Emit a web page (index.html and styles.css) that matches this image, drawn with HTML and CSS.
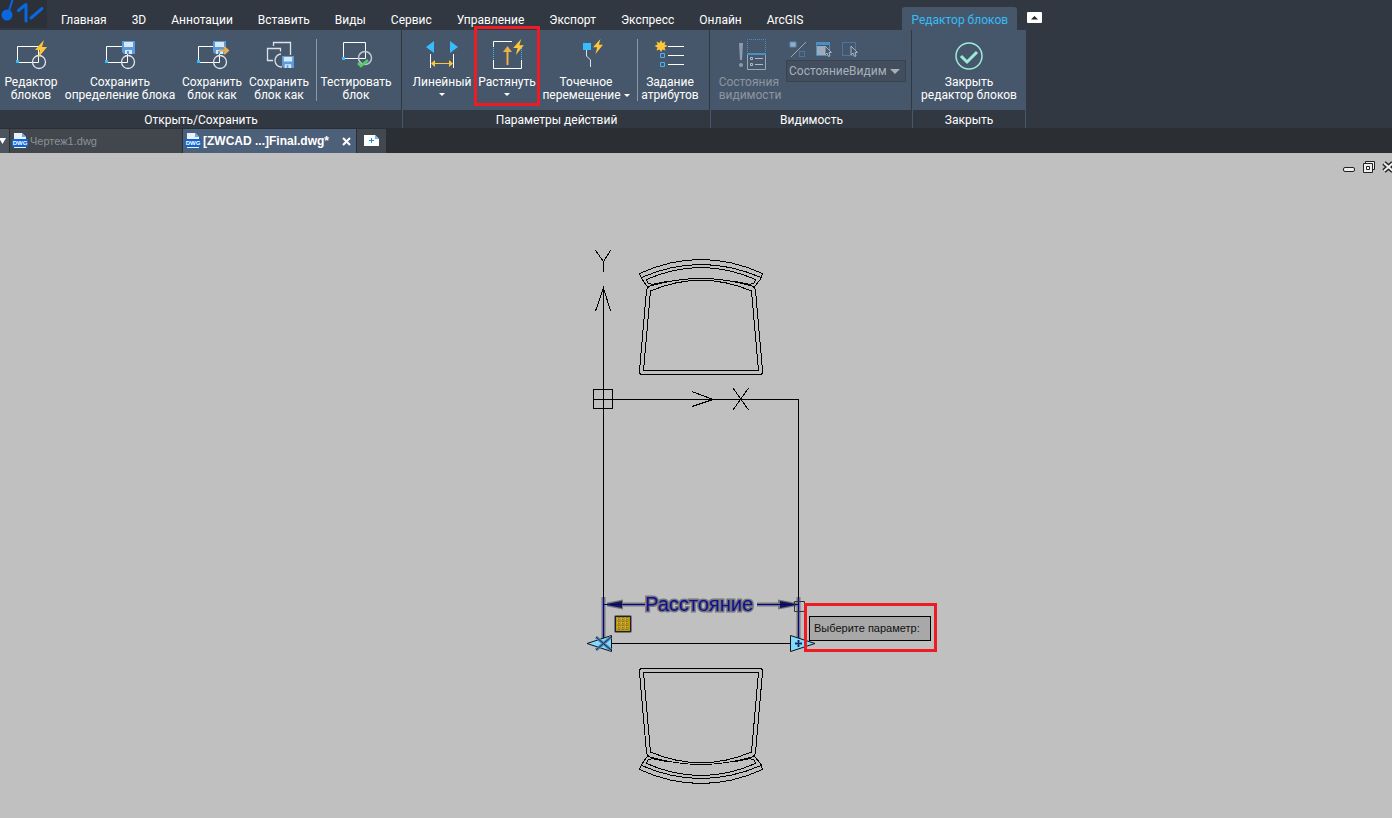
FILE: index.html
```
<!DOCTYPE html>
<html lang="ru">
	<head>
		<meta charset="UTF-8" />
		<meta name="viewport" content="width=device-width, initial-scale=1.0" />
		<title>ZWCAD</title>
		<link rel="stylesheet" href="styles.css">
	</head>
	<body>
		<svg class="defs" width="0" height="0" aria-hidden="true">
			<symbol id="block" viewBox="0 0 34 32">
				<path d="M3.500 8.500H24.500V24.500H3.500Z" fill="none" stroke="#fff" />
				<circle cx="25" cy="24" r="6.500" fill="none" stroke="#e3e7ec" stroke-width="1.300" />
				<rect x="2" y="22" width="3" height="3" fill="#2fc0ff" />
			</symbol>
			<symbol id="bolt" viewBox="0 0 12 18">
				<path d="M9 0L0 10H5L3 18L12 7H7Z" fill="#ffc63a" />
			</symbol>
			<symbol id="disk" viewBox="0 0 13 13">
				<path d="M0 0H13V13H2L0 11Z" fill="#5b9bdc" />
				<path d="M2 1H11V6H2ZM3 9H10V13H3Z" fill="#d7e8f8" />
				<path d="M5 10H7V13H5Z" fill="#5b9bdc" />
			</symbol>
			<symbol id="cursor" viewBox="0 0 8 12">
				<path d="M1 1V10L3 8L4.500 11.500L6 11L5 7.500H7.500Z" fill="#47576b" stroke="#aab3bd" />
			</symbol>
			<symbol id="page" viewBox="0 0 16 16">
				<path d="M2 0H10L14 4V15H2Z" fill="#e8f1fb" />
				<path d="M10 0V4H14Z" fill="#6fa5e8" />
				<rect y="6" width="16" height="8" rx="1" fill="#0f66d0" />
			</symbol>
		</svg>

		<header class="menu">
			<svg class="logo" viewBox="0 0 48 30">
				<path d="M0 0H47V28H0Z" fill="#2b3039" />
				<g fill="none" stroke="#0968e0" stroke-linecap="round">
					<path d="M8 14L13 -2" stroke-width="2" />
					<path d="M18.500 10.500L25 5M26 4.500V21M31 18L42 8.500" stroke-width="3" />
				</g>
				<circle cx="7" cy="15" r="5.500" fill="#0968e0" />
			</svg>
			<nav class="tabs">
				<button class="tab">Главная</button>
				<button class="tab">3D</button>
				<button class="tab">Аннотации</button>
				<button class="tab">Вставить</button>
				<button class="tab">Виды</button>
				<button class="tab">Сервис</button>
				<button class="tab">Управление</button>
				<button class="tab">Экспорт</button>
				<button class="tab">Экспресс</button>
				<button class="tab">Онлайн</button>
				<button class="tab">ArcGIS</button>
			</nav>
			<button class="tab active">Редактор блоков</button>
			<button class="collapse" aria-label="Свернуть ленту">
				<svg width="15" height="11"><rect width="15" height="11" rx="1" fill="#fff" /><path d="M4 7.500L7.500 4L11 7.500Z" fill="#222" /></svg>
			</button>
		</header>

		<div class="ribbon">
			<section class="panel panel-open">
				<div class="tools">
					<button class="tool">
						<svg width="34" height="32"><use href="#block" width="34" height="32" /><use href="#bolt" x="21" y="2" width="12" height="18" /></svg>
						Редактор<br />блоков
					</button>
					<button class="tool">
						<svg width="34" height="32"><use href="#block" width="34" height="32" /><use href="#disk" x="19" y="3" width="13" height="13" /></svg>
						Сохранить<br />определение блока
					</button>
					<button class="tool">
						<svg width="34" height="32"><use href="#block" width="34" height="32" /><use href="#disk" x="18" y="3" width="13" height="13" /><path d="M24 12.500H32M29 9L33 12.500L29 16" fill="none" stroke="#e9b04b" stroke-width="2" /></svg>
						Сохранить<br />блок как
					</button>
					<button class="tool">
						<svg width="34" height="32"><path d="M11.500 8V4.500H28.500V17M11 22.500H5.500V10.500H18.500V13.500M19 16A6.500 6.500 0 1 0 20 29" fill="none" stroke="#dde2e8" stroke-width="1.300" /><use href="#disk" x="20" y="18" width="12" height="12" /></svg>
						Сохранить<br />блок как
					</button>
					<i class="sep"></i>
					<button class="tool">
						<svg width="34" height="32"><path d="M4.500 4.500H26.500V20.500H4.500Z" fill="none" stroke="#fff" /><circle cx="26" cy="20" r="6.500" fill="none" stroke="#bdc7d2" stroke-width="1.500" /><rect x="3" y="19" width="3" height="3" fill="#2fc0ff" /><path d="M19 25L22 28L29 22" fill="none" stroke="#52cf62" stroke-width="2.500" /></svg>
						Тестировать<br />блок
					</button>
				</div>
				<h2>Открыть/Сохранить</h2>
			</section>

			<section class="panel panel-actions">
				<div class="tools">
					<button class="tool">
						<svg width="34" height="32"><path d="M1 9L9 3V15ZM33 9L25 3V15Z" fill="#35bdff" /><path d="M5.500 16V30M28.500 16V30" stroke="#fff" /><path d="M7 25.500H27" stroke="#ffc63a" /><path d="M6 25.500L10 22V29ZM28 25.500L24 22V29Z" fill="#ffc63a" /></svg>
						Линейный<span class="arrow"></span>
					</button>
					<button class="tool">
						<svg width="34" height="32"><path d="M3.500 9V3.500H22M3.500 22V30.500H31.500V22" fill="none" stroke="#fff" /><path d="M3.500 10V22M31.500 10V22" stroke="#35bdff" stroke-dasharray="1 1" /><path d="M17.500 27V12" stroke="#e9b04b" stroke-width="2" /><path d="M13 14L17.500 8L22 14Z" fill="#e9b04b" /><use href="#bolt" x="23" y="1" width="11" height="16" /></svg>
						Растянуть<span class="arrow"></span>
						<span class="frame"></span>
					</button>
					<button class="tool">
						<svg width="34" height="32"><rect x="14" y="5" width="8" height="7" fill="#35bdff" /><path d="M17.500 12V18L21.500 22V29" fill="none" stroke="#dde2e8" /><use href="#bolt" x="24" y="1" width="10" height="15" /></svg>
						Точечное<br />перемещение <span class="arrow inline"></span>
					</button>
					<i class="sep"></i>
					<button class="tool">
						<svg width="34" height="32"><path d="M8 2L9.500 5L12.500 3.500L11.500 6.500L14.500 8L11.500 9.500L12.500 12.500L9.500 11.500L8 14L6.500 11.500L3.500 12.500L4.500 9.500L1.500 8L4.500 6.500L3.500 3.500L6.500 5Z" fill="#ffc63a" /><path d="M15 8.500H31M15 17.500H31M15 26.500H31" stroke="#fff" /><path d="M7.500 15.500H11.500V19.500H7.500ZM7.500 24.500H11.500V28.500H7.500Z" fill="none" stroke="#45b3f4" /></svg>
						Задание<br />атрибутов
					</button>
				</div>
				<h2>Параметры действий</h2>
			</section>

			<section class="panel panel-visibility">
				<div class="tools">
					<button class="tool" disabled>
						<svg width="34" height="32"><path d="M6 5H10L9 22H7Z" fill="#8c9bad" /><circle cx="8" cy="27" r="2" fill="#8c9bad" /><path d="M14.500 16V1.500H32.500V16" fill="none" stroke="#4a8fc4" stroke-dasharray="1 1" /><path d="M14.500 15.500H32.500V31.500H14.500Z" fill="none" stroke="#9ca7b4" /><path d="M14 16H33" stroke="#4a8fc4" stroke-width="2" /><path d="M17.500 19.500H19.500V21.500H17.500ZM17.500 25.500H19.500V27.500H17.500ZM22 20.500H30M22 26.500H30" fill="none" stroke="#b2bbc5" /></svg>
						Состояния<br />видимости
					</button>
					<div class="states">
						<div class="small-tools">
							<button disabled aria-label="Режим видимости"><svg width="18" height="17"><path d="M1 1H7V6H1Z" fill="#9faab8" stroke="#4a8fc4" /><path d="M2 16L17 1" stroke="#9ca7b4" /><path d="M10.500 10.500H15.500V15.500H10.500Z" fill="none" stroke="#4a9ad8" stroke-dasharray="1 1" /></svg></button>
							<button disabled aria-label="Сделать видимым"><svg width="18" height="17"><path d="M1.500 1.500H14.500V14.500H1.500Z" fill="none" stroke="#4a8fc4" /><path d="M1 1H15V4H1Z" fill="#4a8fc4" /><path d="M2 5H11V14H2Z" fill="#9faab8" /><use href="#cursor" x="9" y="4" width="8" height="12" /></svg></button>
							<button disabled aria-label="Сделать невидимым"><svg width="18" height="17"><path d="M1.500 1.500H14.500V14.500H1.500Z" fill="none" stroke="#4a9ad8" stroke-dasharray="1 1" /><use href="#cursor" x="9" y="4" width="8" height="12" /></svg></button>
						</div>
						<select class="state" disabled aria-label="Состояние видимости"><option>СостояниеВидим</option></select>
					</div>
				</div>
				<h2>Видимость</h2>
			</section>

			<section class="panel panel-close">
				<div class="tools">
					<button class="tool">
						<svg width="34" height="32"><circle cx="17" cy="18" r="13" fill="none" stroke="#9debd6" stroke-width="1.500" /><path d="M9 18L15 24L25 14" fill="none" stroke="#9debd6" stroke-width="3" /></svg>
						Закрыть<br />редактор блоков
					</button>
				</div>
				<h2>Закрыть</h2>
			</section>
		</div>

		<div class="files">
			<button class="file-list" aria-label="Список файлов"><svg width="9" height="8"><path d="M-1 1H6L2.500 7Z" fill="#fff" /></svg></button>
			<div class="file">
				<svg width="16" height="16"><use href="#page" width="16" height="16" /><text class="dwg" x="8" y="12">DWG</text></svg>
				Чертеж1.dwg
			</div>
			<div class="file current">
				<svg width="16" height="16"><use href="#page" width="16" height="16" /><text class="dwg" x="8" y="12">DWG</text></svg>
				[ZWCAD ...]Final.dwg*
				<button class="file-close" aria-label="Закрыть файл"><svg width="9" height="9"><path d="M1 1L8 8M8 1L1 8" stroke="#fff" stroke-width="2" /></svg></button>
			</div>
			<button class="file-new" aria-label="Новый файл"><svg width="16" height="12"><path d="M0 0H11L15 4V11H0Z" fill="#fff" /><path d="M11 0V4H15" fill="#7ab5e6" /><path d="M5 5.500H10M7.500 3V8" stroke="#168edc" /></svg></button>
		</div>

		<main class="canvas">
			<div class="window-buttons">
				<button aria-label="Свернуть"><svg width="13" height="12"><rect x="1.500" y="6.500" width="11" height="4" rx="1.500" fill="#eee" stroke="#222" /></svg></button>
				<button aria-label="Восстановить"><svg width="13" height="12"><path d="M3.500 .500H12.500V8.500H3.500Z" fill="#eee" stroke="#222" /><path d="M1.500 2.500H10.500V11.500H1.500Z" fill="#eee" stroke="#222" /><path d="M4.500 5.500H7.500V8.500H4.500Z" fill="#fff" stroke="#222" /></svg></button>
				<button aria-label="Закрыть"><svg width="13" height="12"><path d="M2 2L11 10M11 2L2 10" stroke="#222" stroke-width="5" /><path d="M2 2L11 10M11 2L2 10" stroke="#eee" stroke-width="2" /></svg></button>
			</div>
			<svg class="drawing" width="240" height="550" viewBox="580 240 240 550">
				<g class="line">
					<!-- UCS icon and table -->
					<path d="M595.500 250.500L603.500 261.500L610.500 250.500M603.500 261V272" />
					<path d="M595.500 311L603.500 288L610.500 311" />
					<path d="M603.500 288V643.500H798.500V399.500H593" />
					<path d="M593.500 389.500H612.500V408.500H593.500Z" />
					<path d="M692 391.500L713 399.500L692 406.500M733 388L748.500 410M748.500 388L733 410" />
					<!-- chairs -->
					<g id="chair">
						<path d="M639.500 273.500Q701 245.500 762.500 273.500L761 278.500L754 287.500" />
						<path d="M639.500 273.500L641.500 278.500L648 287.500M641.500 277.500Q701 251.500 761 277.500" />
						<path d="M667 281.500L652 284.500L648 283L646.500 279.500Q701 255.500 755.500 279.500L754 283L750 284.500L735 281.500" />
						<path d="M646.500 290.500Q647 286.500 652 285.500Q701 271.500 750 285.500Q755 286.500 755.500 290.500L762.500 370.500V373L761 374.500H641L639.500 373V370.500Z" />
						<path d="M650.500 291Q701 269.500 751.500 291L758.500 370.500H643.500Z" />
					</g>
					<use href="#chair" transform="translate(0 1043) scale(1 -1)" />
				</g>
				<!-- distance parameter -->
				<path class="halo" d="M603.500 597V642M798.500 597V642M607 604.500H645M757 604.500H798M608 604.500L621 602V607ZM794 604.500L780 602V607Z" />
				<path class="head" d="M604 604.500L622 601V608ZM798 604.500L780 601V608Z" />
				<path class="param" d="M603.500 597V640M798.500 597V640M603 604.500H645M757 604.500H798" />
				<text class="distance" x="645" y="611">Расстояние</text>
				<path class="pick" d="M794.500 601.500H804.500V611.500H794.500Z" />
				<!-- action marker -->
				<rect x="614" y="615" width="18" height="18" rx="2" fill="#767676" />
				<rect x="615.500" y="616.500" width="15" height="15" fill="#b8951b" stroke="#222" />
				<path d="M617 619H629M617 623H629M617 627H629" stroke="#e7d36c" stroke-dasharray="1 1" />
				<path d="M619 617V630M623 617V630M627 617V630" stroke="#6f5b12" stroke-dasharray="1 1" />
				<!-- grips -->
				<path class="grip" d="M587 643.500L611.500 635.500V651.500ZM815 643.500L790.500 635.500V651.500Z" />
				<path class="grip-halo" d="M596 637L611 650M611 637L596 650M795 643.500H802M798.500 640V647" />
				<path class="grip-mark" d="M596 637L611 650M611 637L596 650M795 643.500H802M798.500 640V647" />
			</svg>
			<div class="prompt-frame"><div class="prompt">Выберите параметр:</div></div>
		</main>
	</body>
</html>
```

FILE: styles.css
```
* {
	box-sizing: border-box;
}
body {
	margin: 0;
	min-height: 100vh;
	display: flex;
	flex-direction: column;
	overflow: hidden;
	background: #323841;
	color: #fff;
	font: 12px/13px Roboto, 'Noto Sans', sans-serif;
}
button {
	margin: 0;
	padding: 0;
	border: 0;
	background: none;
	color: inherit;
	font: inherit;
}
svg {
	display: block;
	flex: none;
}
.defs {
	position: absolute;
}

/* menu */
.menu {
	display: flex;
	align-items: flex-end;
	height: 30px;
}
.logo {
	width: 48px;
	height: 30px;
}
.tabs {
	display: flex;
	margin-right: 87px;
}
.tab {
	height: 23px;
	padding: 4px 12px 0 13px;
	white-space: nowrap;
}
.tab.active {
	padding: 4px 9px 0;
	border-radius: 3px 3px 0 0;
	background: #47576b;
	color: #35bdf5;
}
.collapse {
	align-self: center;
	margin: 4px 0 0 10px;
}

/* ribbon */
.ribbon {
	display: flex;
}
.panel {
	border-right: 1px solid #47576b;
}
.tools {
	display: grid;
	height: 80px;
	padding-top: 8px;
	background: #47576b;
	box-shadow: inset -1px 0 #323841;
}
.panel:last-child .tools {
	box-shadow: none;
}
.panel-open .tools {
	grid-template-columns: 62px 116px 68px 66px 8px 72px;
	padding-right: 10px;
}
.panel-actions .tools {
	grid-template-columns: 66px 64px 94px 8px 58px;
	padding: 8px 11px 0 6px;
}
.panel-visibility .tools {
	grid-template-columns: 66px 120px;
	gap: 3px;
	padding: 8px 6px 0 6px;
}
.panel-close .tools {
	grid-template-columns: 112px;
}
.panel h2 {
	margin: 0;
	height: 18px;
	font-size: 12px;
	line-height: 20px;
	font-weight: 400;
	text-align: center;
}
.tool {
	position: relative;
	display: block;
	text-align: center;
	white-space: nowrap;
	align-self: start;
	justify-self: center;
}
.tool svg {
	margin: 0 auto 6px;
}
.tool:disabled {
	color: #8c95a0;
	text-align: left;
}
.arrow {
	display: block;
	width: 0;
	margin: 4px auto 0;
	border: 3px solid transparent;
	border-top-color: #fff;
	border-bottom: 0;
}
.arrow.inline {
	display: inline-block;
	margin: 0;
	vertical-align: 2px;
}
.frame {
	position: absolute;
	top: -12px;
	left: 50%;
	width: 66px;
	height: 80px;
	margin-left: -33px;
	border: 3px solid #ed1c24;
}
.sep {
	width: 1px;
	height: 62px;
	margin: 1px auto 0;
	background: #8b98a8;
}
.small-tools {
	display: flex;
	gap: 8px;
	height: 22px;
	padding: 1px 3px 0;
}
.states {
	position: relative;
}
.states:after {
	content: '';
	position: absolute;
	top: 31px;
	right: 6px;
	border: 5px solid transparent;
	border-top-color: #a7b0ba;
	border-bottom: 0;
}
.state {
	width: 100%;
	height: 22px;
	padding: 1px 2px 0;
	border: 1px solid #39434f;
	border-radius: 0;
	appearance: none;
	background: #424e5d;
	color: #a7b0ba;
	font: inherit;
	opacity: 1;
}

/* file tabs */
.files {
	display: flex;
	gap: 1px;
	height: 25px;
	padding-top: 1px;
	background: #2b2e33;
	font: 12px/14px 'Liberation Sans', Arial, sans-serif;
}
.file-list {
	width: 9px;
	background: #4a555f;
}
.file {
	display: flex;
	align-items: center;
	gap: 2px;
	width: 172px;
	padding-left: 2px;
	background: #42464d;
	color: #8d9196;
	font-size: 11px;
}
.file.current {
	width: 173px;
	background: #4d6079;
	color: #fff;
	font-size: 12px;
	font-weight: 700;
}
.file-close {
	margin: 0 5px 0 auto;
}
.file-new {
	width: 29px;
	padding-left: 7px;
	background: #42484f;
}
.dwg {
	fill: #fff;
	font: bold 6px 'Liberation Sans', Arial, sans-serif;
	text-anchor: middle;
}

/* drawing area */
.canvas {
	position: relative;
	flex: 1;
	min-height: 640px;
	background: #c0c0c0;
	color: #111;
}
.window-buttons {
	position: absolute;
	top: 8px;
	right: -3px;
	display: flex;
	gap: 7px;
}
.drawing {
	position: absolute;
	top: 87px;
	left: 580px;
}
.line {
	fill: none;
	stroke: #000;
	shape-rendering: crispEdges;
}
.halo {
	fill: none;
	stroke: #777;
	stroke-width: 4px;
}
.param {
	stroke: #0000a0;
}
.head {
	fill: #17174f;
}
.pick {
	fill: none;
	stroke: #333;
}
.grip {
	fill: #7fdcff;
	stroke: #111;
}
.grip-halo {
	stroke: #5a87a5;
	stroke-width: 3px;
}
.grip-mark {
	stroke: #0b2875;
}
.distance {
	fill: #101090;
	stroke: #777;
	stroke-width: 3px;
	paint-order: stroke;
	font: 20px 'Liberation Sans', Arial, sans-serif;
}
.prompt-frame {
	position: absolute;
	top: 450px;
	left: 804px;
	padding: 10px 3px 8px 2px;
	border: 3px solid #ed1c24;
}
.prompt {
	width: 122px;
	padding: 5px 4px;
	border: 1px solid #000;
	background: #a8a8a8;
	font: 11px/13px 'Liberation Sans', Arial, sans-serif;
	white-space: nowrap;
}
```
